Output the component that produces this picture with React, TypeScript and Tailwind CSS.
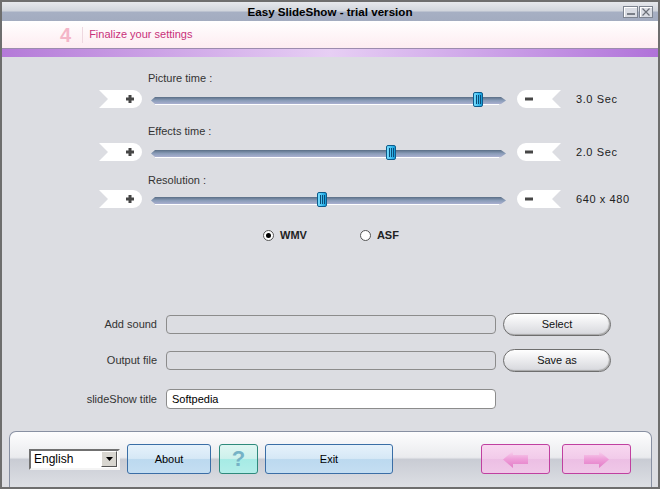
import React from 'react';

const PlusFlag = () => (
    <svg width="43" height="18" viewBox="0 0 43 18">
        <path d="M0,0 H34 A9,9 0 0 1 34,18 H0 L9,9 Z" fill="#ffffff" />
        <rect x="27" y="7.5" width="8" height="3" fill="#464646" />
        <rect x="29.5" y="5" width="3" height="8" fill="#464646" />
    </svg>
);

const MinusFlag = () => (
    <svg width="44" height="18" viewBox="0 0 44 18">
        <path d="M9,0 H44 L35,9 L44,18 H9 A9,9 0 0 1 9,0 Z" fill="#ffffff" />
        <rect x="8" y="7.5" width="8" height="3" fill="#464646" />
    </svg>
);

const Track = ({ thumb }: { thumb: number }) => (
    <div className="relative w-[356px] h-[18px]">
        <svg width="356" height="18" viewBox="0 0 356 18" className="block">
            <defs>
                <linearGradient id="trk" x1="0" y1="0" x2="0" y2="1">
                    <stop offset="0" stopColor="#5a6e86" />
                    <stop offset="0.5" stopColor="#8a9cb8" />
                    <stop offset="1" stopColor="#aab0d0" />
                </linearGradient>
                <linearGradient id="line" x1="0" y1="0" x2="1" y2="0">
                    <stop offset="0" stopColor="#8fd0f4" />
                    <stop offset="0.45" stopColor="#9aa8e0" />
                    <stop offset="0.8" stopColor="#d03a98" />
                    <stop offset="1" stopColor="#d8187e" />
                </linearGradient>
            </defs>
            <line x1="4" y1="14.5" x2="348" y2="14.5" stroke="#ffffff" strokeWidth="1" />
            <polygon points="0,10.5 4,7 350,7 355,10.5 350,14 4,14" fill="url(#trk)" />
            <line x1="5" y1="10.5" x2="348" y2="10.5" stroke="url(#line)" strokeWidth="1" />
        </svg>
        <div
            className="absolute top-[2px] w-[10px] h-[15px] rounded-[2px] border border-[#0b5c8c] bg-gradient-to-r from-[#7adcfc] via-[#3ec0f2] to-[#1499d6] flex items-center justify-center gap-[1px]"
            style={{ left: thumb }}
        >
            <span className="w-[1px] h-[9px] bg-[#0a4d78]" />
            <span className="w-[1px] h-[9px] bg-[#0a4d78]" />
            <span className="w-[1px] h-[9px] bg-[#0a4d78]" />
        </div>
    </div>
);

const SliderRow = ({ thumb, value }: { thumb: number; value: string }) => (
    <div className="flex items-center h-[18px] ml-[97px]">
        <PlusFlag />
        <div className="ml-[9px]">
            <Track thumb={thumb} />
        </div>
        <div className="ml-[10px]">
            <MinusFlag />
        </div>
        <span className="ml-[15px] text-[11px] text-[#222] tracking-[0.6px] whitespace-pre">{value}</span>
    </div>
);

const Arrow = ({ dir }: { dir: 'left' | 'right' }) => (
    <svg width="25" height="17" viewBox="0 0 25 17">
        <defs>
            <linearGradient id={`ar-${dir}`} x1="0" y1="0" x2="0" y2="1">
                <stop offset="0" stopColor="#f8d4ee" />
                <stop offset="0.5" stopColor="#ee9cd8" />
                <stop offset="1" stopColor="#e27cc6" />
            </linearGradient>
        </defs>
        <path
            d={dir === 'left' ? 'M0,8.5 L10,0 V4 H25 V13 H10 V17 Z' : 'M25,8.5 L15,0 V4 H0 V13 H15 V17 Z'}
            fill={`url(#ar-${dir})`}
        />
    </svg>
);

export default function App() {
    return (
        <div className="w-[660px] h-[489px] flex flex-col border-2 border-[#6e6e6e] bg-[#dcdde2] overflow-hidden font-['Liberation_Sans',Arial,sans-serif] text-[11px] text-[#222]">
            {/* Title bar */}
            <div className="h-[19px] grid grid-cols-[1fr_auto_1fr] items-center bg-[linear-gradient(to_bottom,#e6e8ec_0%,#d2d6dd_45%,#a6afc3_55%,#a3acc0_100%)]">
                <div />
                <span className="text-[11.6px] font-bold text-black">Easy SlideShow - trial version</span>
                <div className="flex justify-end gap-[1px] pr-[5px]">
                    <div className="w-[15px] h-[12px] border border-[#7d8490] bg-[#d9dce3] shadow-[inset_1px_1px_0_#fff] flex items-end justify-center pb-[2px]">
                        <span className="w-[8px] h-[2px] bg-[#7a7f88]" />
                    </div>
                    <div className="w-[14px] h-[12px] border border-[#7d8490] bg-[#d9dce3] shadow-[inset_1px_1px_0_#fff] flex items-center justify-center">
                        <svg width="8" height="8" viewBox="0 0 8 8">
                            <path d="M0.5,0.5 L7.5,7.5 M7.5,0.5 L0.5,7.5" stroke="#6a6f78" strokeWidth="1.2" />
                        </svg>
                    </div>
                </div>
            </div>

            {/* Step header */}
            <div className="h-[27px] flex items-center bg-gradient-to-b from-white to-[#fdecf1]">
                <span className="ml-[58px] text-[20px] font-bold text-[#f4b6c8] leading-none">4</span>
                <span className="ml-[11px] w-[1px] h-[16px] bg-[#eed8e0]" />
                <span className="ml-[6px] text-[11px] text-[#c8307a]">Finalize your settings</span>
            </div>
            <div className="h-[9px] border-t border-[#9c8cae] bg-gradient-to-r from-[#b47ad8] via-[#e7cff4] to-[#b072d9]" />

            {/* Body */}
            <div className="flex-1 flex flex-col">
                <div className="mt-[13px] h-[14px] ml-[146px] text-[#333]">Picture time :</div>
                <div className="mt-[6px]"><SliderRow thumb={322} value="3.0 Sec" /></div>

                <div className="mt-[15px] h-[14px] ml-[146px] text-[#333]">Effects time :</div>
                <div className="mt-[6px]"><SliderRow thumb={235} value="2.0 Sec" /></div>

                <div className="mt-[11px] h-[14px] ml-[146px] text-[#333]">Resolution :</div>
                <div className="mt-[4px]"><SliderRow thumb={166} value="640 x 480" /></div>

                {/* Format */}
                <div className="mt-[20px] h-[14px] flex items-center ml-[261px]">
                    <span className="w-[11px] h-[11px] rounded-full border border-[#555] bg-white flex items-center justify-center">
                        <span className="w-[5px] h-[5px] rounded-full bg-black" />
                    </span>
                    <span className="ml-[6px] font-bold text-[#222]">WMV</span>
                    <span className="ml-[53px] w-[11px] h-[11px] rounded-full border border-[#555] bg-white" />
                    <span className="ml-[6px] font-bold text-[#222]">ASF</span>
                </div>

                {/* Files */}
                <div className="mt-[70px] h-[24px] flex items-center">
                    <span className="w-[155px] text-right text-[#333]">Add sound</span>
                    <div className="ml-[9px] w-[330px] h-[19px] rounded-[4px] border border-[#8c8c8c]" />
                    <button className="ml-[7px] w-[108px] h-[23px] rounded-full border border-[#6e6e6e] bg-gradient-to-b from-white to-[#d6d7dc] shadow-[inset_-1px_-1px_1px_#a8a8a8] text-[11px] text-[#111]">
                        Select
                    </button>
                </div>
                <div className="mt-[12px] h-[24px] flex items-center">
                    <span className="w-[155px] text-right text-[#333]">Output file</span>
                    <div className="ml-[9px] w-[330px] h-[19px] rounded-[4px] border border-[#8c8c8c]" />
                    <button className="ml-[7px] w-[108px] h-[23px] rounded-full border border-[#6e6e6e] bg-gradient-to-b from-white to-[#d6d7dc] shadow-[inset_-1px_-1px_1px_#a8a8a8] text-[11px] text-[#111]">
                        Save as
                    </button>
                </div>
                <div className="mt-[15px] h-[24px] flex items-center">
                    <span className="w-[155px] text-right text-[#333]">slideShow title</span>
                    <div className="ml-[9px] w-[330px] h-[20px] rounded-[4px] border border-[#8c8c8c] bg-white flex items-center pl-[5px] text-[11px] text-black">
                        Softpedia
                    </div>
                </div>

                {/* Bottom panel */}
                <div className="mt-[20px] ml-[7px] mr-[6px] h-[56px] rounded-t-[7px] border-t border-x border-[#8890a2] bg-[linear-gradient(to_bottom,#fdfdfe_0%,#eaebee_46%,#c9ccd4_50%,#dddfe4_100%)] flex items-center pl-[19px] pb-[1px]">
                    <div className="w-[91px] h-[21px] border-2 border-t-[#707070] border-l-[#707070] border-b-[#f4f4f4] border-r-[#f4f4f4] bg-white flex items-center">
                        <span className="flex-1 pl-[3px] text-[12px] text-black">English</span>
                        <span className="w-[16px] h-[16px] mr-[1px] bg-[#d8d6d0] border border-t-white border-l-white border-b-[#555] border-r-[#555] flex items-center justify-center">
                            <svg width="7" height="4" viewBox="0 0 7 4"><path d="M0,0 H7 L3.5,4 Z" fill="#000" /></svg>
                        </span>
                    </div>
                    <button className="ml-[7px] w-[84px] h-[30px] rounded-[3px] border border-[#3a6ea6] bg-[linear-gradient(to_bottom,#e6f2fb_0%,#d6e8f6_48%,#bcd9ef_52%,#c4def2_100%)] text-[11px] text-black">
                        About
                    </button>
                    <button className="ml-[8px] w-[39px] h-[30px] rounded-[3px] border border-[#2e8a7c] bg-[linear-gradient(to_bottom,#dff6f2_0%,#cdf1ec_48%,#a6ebe5_52%,#b2eee9_100%)] text-[22px] font-bold text-[#76b2c6] leading-none">
                        ?
                    </button>
                    <button className="ml-[7px] w-[128px] h-[30px] rounded-[3px] border border-[#3a6ea6] bg-[linear-gradient(to_bottom,#e6f2fb_0%,#d6e8f6_48%,#bcd9ef_52%,#c4def2_100%)] text-[11px] text-black">
                        Exit
                    </button>
                    <button className="ml-[88px] w-[69px] h-[30px] rounded-[3px] border border-[#c040a0] bg-[linear-gradient(to_bottom,#f8d8f0_0%,#f2cbea_48%,#ecbfe4_52%,#f0c8e8_100%)] flex items-center justify-center">
                        <Arrow dir="left" />
                    </button>
                    <button className="ml-[12px] w-[69px] h-[30px] rounded-[3px] border border-[#c040a0] bg-[linear-gradient(to_bottom,#f8d8f0_0%,#f2cbea_48%,#ecbfe4_52%,#f0c8e8_100%)] flex items-center justify-center">
                        <Arrow dir="right" />
                    </button>
                </div>
            </div>
        </div>
    );
}
